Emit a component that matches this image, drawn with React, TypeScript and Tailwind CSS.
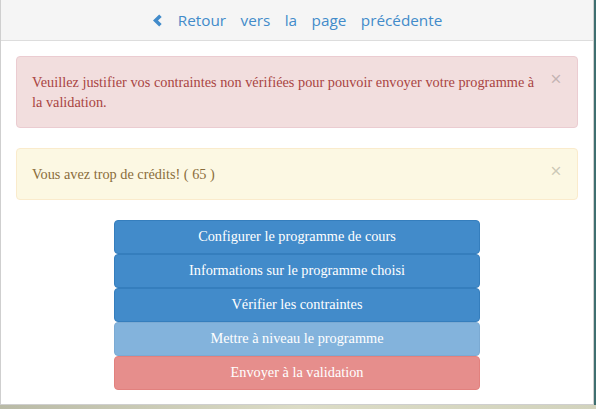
import React from "react";

const serif = { fontFamily: '"Liberation Serif", "Times New Roman", serif' };

function ChevronLeft() {
	return (
		<svg width="10" height="13" viewBox="0 0 10 13" className="mr-[16px]">
			<path d="M7.2 0.5 L9.7 2.9 L6 6.5 L9.7 10.1 L7.2 12.5 L1 6.5 Z" fill="#428bca" />
		</svg>
	);
}

function Alert({ kind, children }: { kind: "danger" | "warning"; children: React.ReactNode }) {
	const cls =
		kind === "danger"
			? "bg-[#f2dede] border-[#ebccd1] text-[#a94442]"
			: "bg-[#fcf8e3] border-[#faebcc] text-[#8a6d3b]";
	return (
		<div className={`relative mb-[20px] rounded-[4px] border py-[15px] pl-[15px] pr-[35px] text-[14.3px] leading-[20px] ${cls}`}>
			<span className="absolute right-[15px] top-[12px] text-[21px] font-bold leading-none text-black/20" style={serif}>
				×
			</span>
			{children}
		</div>
	);
}

const buttons = [
	{ label: "Configurer le programme de cours", style: "bg-[#428bca] border-[#357ebd]" },
	{ label: "Informations sur le programme choisi", style: "bg-[#428bca] border-[#357ebd]" },
	{ label: "Vérifier les contraintes", style: "bg-[#428bca] border-[#357ebd]" },
	{ label: "Mettre à niveau le programme", style: "bg-[#428bca] border-[#357ebd] opacity-65" },
	{ label: "Envoyer à la validation", style: "bg-[#d9534f] border-[#d43f3a] opacity-65" },
];

export default function App() {
	return (
		<div className="h-[409px] w-[596px] overflow-hidden bg-gradient-to-r from-[#b9baa6] via-[#dcdcc6] to-[#d2d3bd]">
			<div className="flex h-[405px]">
				<div className="flex w-[594px] flex-col border-x border-b border-[#cfcfcf] bg-white" style={serif}>
					<div className="flex h-[41px] items-center justify-center border-b border-[#dddddd] bg-[#f5f5f5] pt-[1px]">
						<ChevronLeft />
						<span
							className="text-[15.3px] text-[#428bca]"
							style={{ fontFamily: '"Open Sans", "Noto Sans", sans-serif', wordSpacing: "10.5px" }}
						>
							Retour vers la page précédente
						</span>
					</div>
					<div className="px-[15px] pt-[15px]">
						<Alert kind="danger">
							Veuillez justifier vos contraintes non vérifiées pour pouvoir envoyer votre programme à la validation.
						</Alert>
						<Alert kind="warning">Vous avez trop de crédits! ( 65 )</Alert>
						<div className="mx-auto flex w-[366px] flex-col">
							{buttons.map((b) => (
								<div
									key={b.label}
									className={`h-[34px] rounded-[4px] border px-[12px] pb-[7px] pt-[5px] text-center text-[14.3px] leading-[20px] text-white ${b.style}`}
								>
									{b.label}
								</div>
							))}
						</div>
					</div>
				</div>
				<div className="w-[2px] bg-[#3f6f70]" />
			</div>
		</div>
	);
}
